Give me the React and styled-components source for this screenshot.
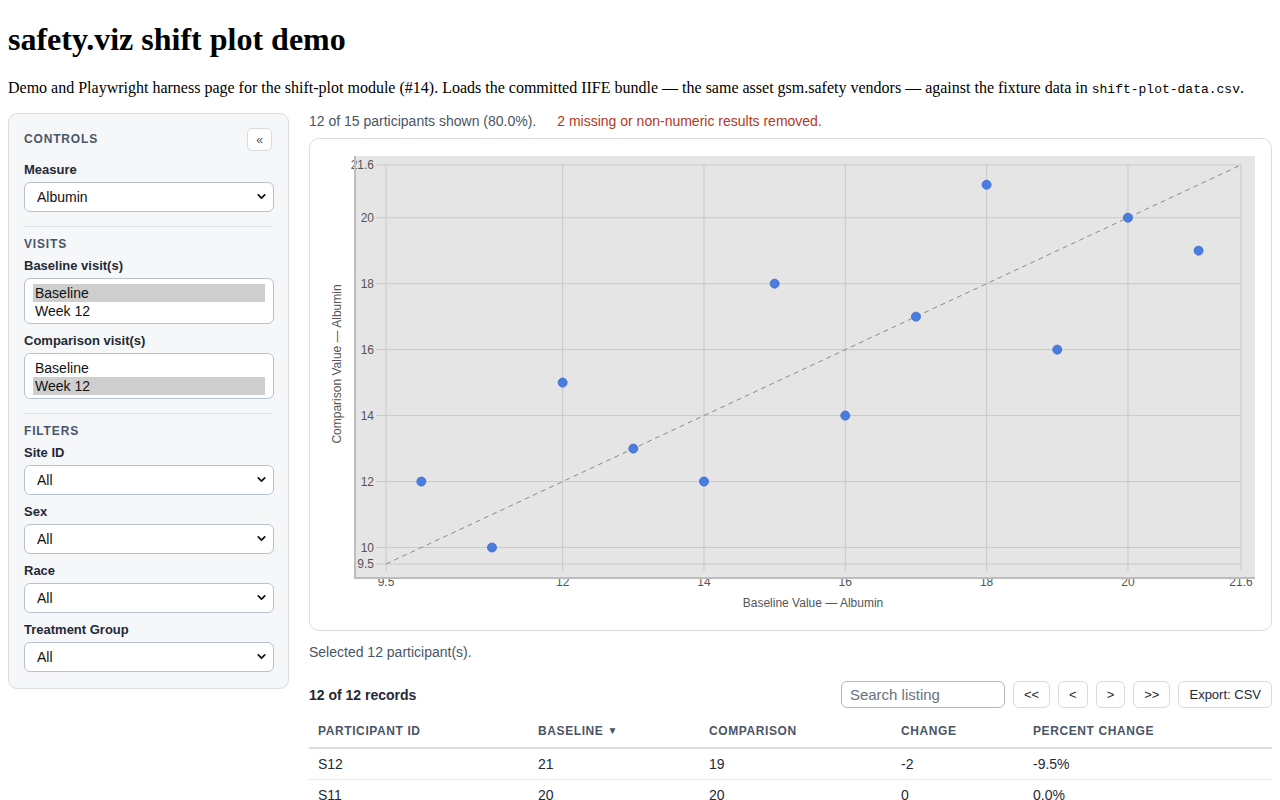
import React from 'react';
import styled, { createGlobalStyle } from 'styled-components';
import { ChevronDown } from 'lucide-react';

const GlobalStyle = createGlobalStyle`
	body {
		margin: 8px;
		background: #fff;
		font-family: 'Liberation Serif', 'Times New Roman', serif;
		color: #000;
	}
`;

const SANS = `'Liberation Sans', Arial, Helvetica, sans-serif`;

const points = [
	{ id: 'S01', b: 10, c: 12 },
	{ id: 'S02', b: 11, c: 10 },
	{ id: 'S03', b: 12, c: 15 },
	{ id: 'S04', b: 13, c: 13 },
	{ id: 'S05', b: 14, c: 12 },
	{ id: 'S06', b: 15, c: 18 },
	{ id: 'S07', b: 16, c: 14 },
	{ id: 'S08', b: 17, c: 17 },
	{ id: 'S09', b: 18, c: 21 },
	{ id: 'S10', b: 19, c: 16 },
	{ id: 'S11', b: 20, c: 20 },
	{ id: 'S12', b: 21, c: 19 },
];

const rows = [
	{ id: 'S12', b: 21, c: 19, d: -2, pct: '-9.5%' },
	{ id: 'S11', b: 20, c: 20, d: 0, pct: '0.0%' },
];

const xTicks = [9.5, 12, 14, 16, 18, 20, 21.6];
const yTicks = [9.5, 10, 12, 14, 16, 18, 20, 21.6];

// linear scales for the 9.5 – 21.6 domain on both axes
const xs = (v) => 76 + (v - 9.5) * 70.66;
const ys = (v) => 425 - (v - 9.5) * 32.98;

const columns = [
	{ key: 'id', label: 'Participant ID', width: 220 },
	{ key: 'b', label: 'Baseline', width: 171, sorted: true },
	{ key: 'c', label: 'Comparison', width: 192 },
	{ key: 'd', label: 'Change', width: 132 },
	{ key: 'pct', label: 'Percent Change' },
];

function Select({ value }) {
	return (
		<SelectWrap>
			<NativeSelect defaultValue={value}>
				<option>{value}</option>
			</NativeSelect>
			<Chevron>
				<ChevronDown size={13} strokeWidth={3.2} />
			</Chevron>
		</SelectWrap>
	);
}

function ListBox({ options, selected }) {
	return (
		<List role='listbox'>
			{options.map((o) => (
				<Option key={o} active={o === selected}>
					{o}
				</Option>
			))}
		</List>
	);
}

function ShiftChart() {
	return (
		<svg width='961' height='491'>
			<rect x='44' y='17' width='901' height='423' fill='#e5e5e5' />
			{yTicks.map((t) => (
				<g key={'y' + t}>
					<line x1='66' x2={xs(21.6)} y1={ys(t)} y2={ys(t)} stroke='#c9c9c9' />
					<text x='64' y={ys(t) + 4} textAnchor='end' fontSize='12' fill='#555' fontFamily={SANS}>
						{t}
					</text>
				</g>
			))}
			{xTicks.map((t) => (
				<g key={'x' + t}>
					<line x1={xs(t)} x2={xs(t)} y1={ys(21.6)} y2='432' stroke='#c9c9c9' />
					<text x={xs(t)} y='447' textAnchor='middle' fontSize='12' fill='#555' fontFamily={SANS}>
						{t}
					</text>
				</g>
			))}
			<line x1='45' x2='45' y1='17' y2='440' stroke='#bdbdbd' strokeWidth='2' />
			<line x1='44' x2='945' y1='439' y2='439' stroke='#bdbdbd' strokeWidth='2' />
			<line
				x1={xs(9.5)}
				y1={ys(9.5)}
				x2={xs(21.6)}
				y2={ys(21.6)}
				stroke='#8a8a8a'
				strokeDasharray='5 4'
			/>
			{points.map((p) => (
				<circle key={p.id} cx={xs(p.b)} cy={ys(p.c)} r='4.5' fill='#4a7de0' stroke='#3966c6' strokeWidth='0.8' />
			))}
			<text x='503' y='468' textAnchor='middle' fontSize='12' fill='#555' fontFamily={SANS}>
				Baseline Value — Albumin
			</text>
			<text
				transform='translate(31 225) rotate(-90)'
				textAnchor='middle'
				fontSize='12'
				fill='#555'
				fontFamily={SANS}
			>
				Comparison Value — Albumin
			</text>
		</svg>
	);
}

export default function App() {
	return (
		<>
			<GlobalStyle />
			<Title>safety.viz shift plot demo</Title>
			<Intro>
				Demo and Playwright harness page for the shift-plot module (#14). Loads the committed IIFE bundle — the
				same asset gsm.safety vendors — against the fixture data in <code>shift-plot-data.csv</code>.
			</Intro>
			<Layout>
				<Sidebar>
					<PanelHead>
						<SectionTitle>Controls</SectionTitle>
						<CollapseBtn>«</CollapseBtn>
					</PanelHead>
					<Field first>
						<Label>Measure</Label>
						<Select value='Albumin' />
					</Field>
					<Divider />
					<SectionTitle>Visits</SectionTitle>
					<Field>
						<Label>Baseline visit(s)</Label>
						<ListBox options={['Baseline', 'Week 12']} selected='Baseline' />
					</Field>
					<Field>
						<Label>Comparison visit(s)</Label>
						<ListBox options={['Baseline', 'Week 12']} selected='Week 12' />
					</Field>
					<Divider />
					<SectionTitle>Filters</SectionTitle>
					{['Site ID', 'Sex', 'Race', 'Treatment Group'].map((f) => (
						<Field key={f}>
							<Label>{f}</Label>
							<Select value='All' />
						</Field>
					))}
				</Sidebar>
				<Main>
					<Status>
						<span>12 of 15 participants shown (80.0%).</span>
						<Warn>2 missing or non-numeric results removed.</Warn>
					</Status>
					<ChartCard>
						<ShiftChart />
					</ChartCard>
					<Selected>Selected 12 participant(s).</Selected>
					<Toolbar>
						<Count>12 of 12 records</Count>
						<Controls>
							<Search placeholder='Search listing' />
							<PageBtn>{'<<'}</PageBtn>
							<PageBtn>{'<'}</PageBtn>
							<PageBtn>{'>'}</PageBtn>
							<PageBtn>{'>>'}</PageBtn>
							<PageBtn>Export: CSV</PageBtn>
						</Controls>
					</Toolbar>
					<Table>
						<thead>
							<tr>
								{columns.map((c) => (
									<Th key={c.key} width={c.width}>
										{c.label}
										{c.sorted && <SortMark>▼</SortMark>}
									</Th>
								))}
							</tr>
						</thead>
						<tbody>
							{rows.map((r) => (
								<tr key={r.id}>
									{columns.map((c) => (
										<Td key={c.key}>{r[c.key]}</Td>
									))}
								</tr>
							))}
						</tbody>
					</Table>
				</Main>
			</Layout>
		</>
	);
}

const Title = styled.h1`
	font-family: 'Liberation Serif', 'Times New Roman', serif;
	font-size: 32px;
	font-weight: bold;
	margin: 13px 0 21px;
`;

const Intro = styled.p`
	font-family: 'Liberation Serif', 'Times New Roman', serif;
	font-size: 16px;
	margin: 16px 0;
	code {
		font-family: 'Liberation Mono', 'Courier New', monospace;
		font-size: 13px;
	}
`;

const Layout = styled.div`
	display: grid;
	grid-template-columns: 281px 1fr;
	gap: 20px;
	align-items: start;
	font-family: ${SANS};
`;

const Sidebar = styled.aside`
	background: #f6f7f9;
	border: 1px solid #d9dee5;
	border-radius: 9px;
	padding: 14px 15px 16px;
	display: flex;
	flex-direction: column;
`;

const PanelHead = styled.div`
	display: flex;
	align-items: center;
	justify-content: space-between;
	height: 23px;
`;

const SectionTitle = styled.div`
	font-size: 12px;
	line-height: 15px;
	font-weight: bold;
	letter-spacing: 0.07em;
	text-transform: uppercase;
	color: #4a5568;
	margin-bottom: 6px;
	${PanelHead} & {
		margin-bottom: 0;
	}
`;

const CollapseBtn = styled.button`
	width: 25px;
	height: 23px;
	margin-right: 1px;
	padding: 0;
	border: 1px solid #d6dbe2;
	border-radius: 5px;
	background: #fff;
	color: #4a5568;
	font-family: ${SANS};
	font-size: 12px;
	line-height: 1;
`;

const Field = styled.div`
	display: flex;
	flex-direction: column;
	gap: 4px;
	margin-top: ${(p) => (p.first ? '11px' : '0')};
	& + & {
		margin-top: 9px;
	}
`;

const Label = styled.label`
	font-size: 13px;
	line-height: 16px;
	font-weight: bold;
	color: #1f2937;
`;

const Divider = styled.hr`
	border: 0;
	border-top: 1px solid #dfe3e8;
	margin: 14px 0 10px;
	width: 100%;
`;

const SelectWrap = styled.div`
	position: relative;
	width: 250px;
`;

const NativeSelect = styled.select`
	appearance: none;
	width: 100%;
	height: 30px;
	padding: 0 28px 0 12px;
	border: 1px solid #b9c1cc;
	border-radius: 6px;
	background: #fff;
	color: #111;
	font-family: ${SANS};
	font-size: 14px;
`;

const Chevron = styled.span`
	position: absolute;
	right: 6px;
	top: 8px;
	color: #111;
	pointer-events: none;
	display: flex;
`;

const List = styled.div`
	width: 250px;
	box-sizing: border-box;
	height: 46px;
	padding: 5px 8px 3px;
	border: 1px solid #b9c1cc;
	border-radius: 6px;
	background: #fff;
`;

const Option = styled.div`
	font-size: 14px;
	line-height: 18px;
	padding: 0 2px;
	color: #111;
	background: ${(p) => (p.active ? '#cecece' : 'transparent')};
`;

const Main = styled.main`
	display: flex;
	flex-direction: column;
	min-width: 0;
`;

const Status = styled.div`
	display: flex;
	gap: 21px;
	font-size: 14px;
	line-height: 16px;
	color: #4a5568;
`;

const Warn = styled.span`
	color: #b4371d;
`;

const ChartCard = styled.div`
	margin-top: 9px;
	height: 491px;
	border: 1px solid #d9dee5;
	border-radius: 10px;
	background: #fff;
	overflow: hidden;
	svg {
		display: block;
	}
`;

const Selected = styled.div`
	margin-top: 13px;
	font-size: 14px;
	line-height: 16px;
	color: #4a5568;
`;

const Toolbar = styled.div`
	margin-top: 21px;
	display: flex;
	align-items: center;
	justify-content: space-between;
	height: 27px;
`;

const Count = styled.div`
	font-size: 14px;
	font-weight: bold;
	color: #1f2937;
`;

const Controls = styled.div`
	display: flex;
	gap: 8px;
	align-items: center;
`;

const Search = styled.input`
	width: 164px;
	height: 27px;
	box-sizing: border-box;
	padding: 0 8px;
	border: 1px solid #aeb6c1;
	border-radius: 6px;
	font-family: ${SANS};
	font-size: 15px;
	color: #111;
	&::placeholder {
		color: #6b7280;
	}
`;

const PageBtn = styled.button`
	height: 27px;
	padding: 0 10px;
	border: 1px solid #d6dbe2;
	border-radius: 6px;
	background: #fff;
	color: #1f2937;
	font-family: ${SANS};
	font-size: 13px;
`;

const Table = styled.table`
	margin-top: 7px;
	width: 100%;
	border-collapse: collapse;
	table-layout: fixed;
`;

const Th = styled.th`
	box-sizing: border-box;
	width: ${(p) => (p.width ? p.width + 'px' : 'auto')};
	padding: 8px 9px;
	text-align: left;
	font-size: 12px;
	line-height: 15px;
	font-weight: bold;
	letter-spacing: 0.05em;
	text-transform: uppercase;
	color: #4a5568;
	border-bottom: 2px solid #d6dbe1;
`;

const SortMark = styled.span`
	font-size: 10px;
	margin-left: 4px;
	vertical-align: 1px;
`;

const Td = styled.td`
	padding: 7px 9px;
	font-size: 14px;
	line-height: 16px;
	color: #1f2937;
	border-bottom: 1px solid #e5e8ec;
`;
